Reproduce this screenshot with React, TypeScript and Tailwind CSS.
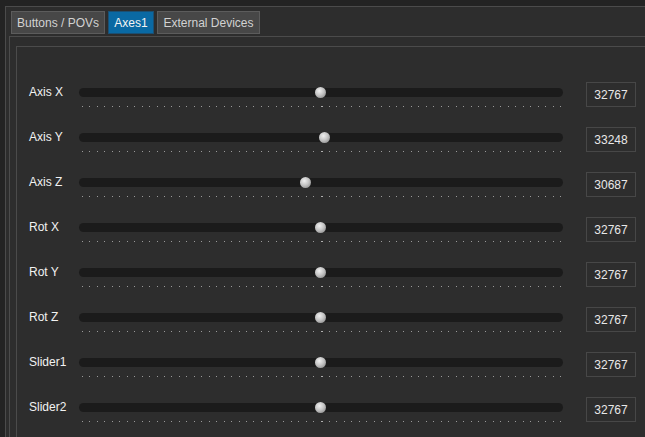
import React from "react";

const rows = [
  { label: "Axis X", value: 32767 },
  { label: "Axis Y", value: 33248 },
  { label: "Axis Z", value: 30687 },
  { label: "Rot X", value: 32767 },
  { label: "Rot Y", value: 32767 },
  { label: "Rot Z", value: 32767 },
  { label: "Slider1", value: 32767 },
  { label: "Slider2", value: 32767 },
];

const dots = Array.from({ length: 65 }, (_, i) => i);

function Row({ label, value }: { label: string; value: number }) {
  const pos = 5 + (474 * value) / 65535;
  return (
    <div className="flex items-start h-[45px] shrink-0">
      <div className="ml-[12px] mt-[3px] w-[50px] text-[12px] leading-[14px] text-[#f2f2f2]">{label}</div>
      <div className="w-[484px] shrink-0 mt-[6px]">
        <div className="relative h-[9px] rounded-full bg-[#1b1b1b]">
          <div
            className="absolute top-[-1px] w-[11px] h-[11px] rounded-full bg-[radial-gradient(circle_at_40%_35%,#f0f0f0_0%,#c4c4c4_45%,#7a7a7a_100%)]"
            style={{ left: pos - 5.5 }}
          />
        </div>
        <div className="ml-[3px] w-[479px] mt-[9px] flex justify-between items-center h-[1px]">
          {dots.map((d) =>
            d === 32 ? (
              <div key={d} className="w-[2px] h-[1px] bg-[#b0b0b0]" />
            ) : (
              <div key={d} className="w-[1px] h-[1px] bg-[#9a9a9a]" />
            )
          )}
        </div>
      </div>
      <div className="ml-[23px] w-[50px] h-[25px] border border-[#474747] flex items-center justify-center text-[12px] text-[#e8e8e8]">
        {value}
      </div>
    </div>
  );
}

export default function App() {
  return (
    <div
      className="w-[645px] h-[437px] overflow-hidden bg-[#232323] pt-[6px] pl-[5px]"
      style={{ fontFamily: '"Liberation Sans", Arial, sans-serif' }}
    >
      <div className="h-full border-t border-l border-[#4b4b4b] bg-[#2d2d2d] flex flex-col">
        <div className="flex pt-[4px] pl-[5px] gap-[3px] text-[12px]">
          <div className="h-[23px] w-[94px] border border-[#5c5c5c] bg-[#474747] text-[#d2d2d2] flex items-center justify-center">
            Buttons / POVs
          </div>
          <div className="h-[23px] w-[46px] border border-[#1b4f72] bg-[#0a69a3] text-[#f4f4f4] flex items-center justify-center">
            Axes1
          </div>
          <div className="h-[23px] w-[103px] border border-[#5c5c5c] bg-[#474747] text-[#d2d2d2] flex items-center justify-center">
            External Devices
          </div>
        </div>
        <div className="mt-[2px] ml-[3px] flex-1 border-t border-l border-[#4b4b4b] flex flex-col">
          <div className="mt-[9px] ml-[6px] flex-1 border-t border-l border-[#4b4b4b] pt-[35px] flex flex-col">
            {rows.map((r) => (
              <Row key={r.label} label={r.label} value={r.value} />
            ))}
          </div>
        </div>
      </div>
    </div>
  );
}
